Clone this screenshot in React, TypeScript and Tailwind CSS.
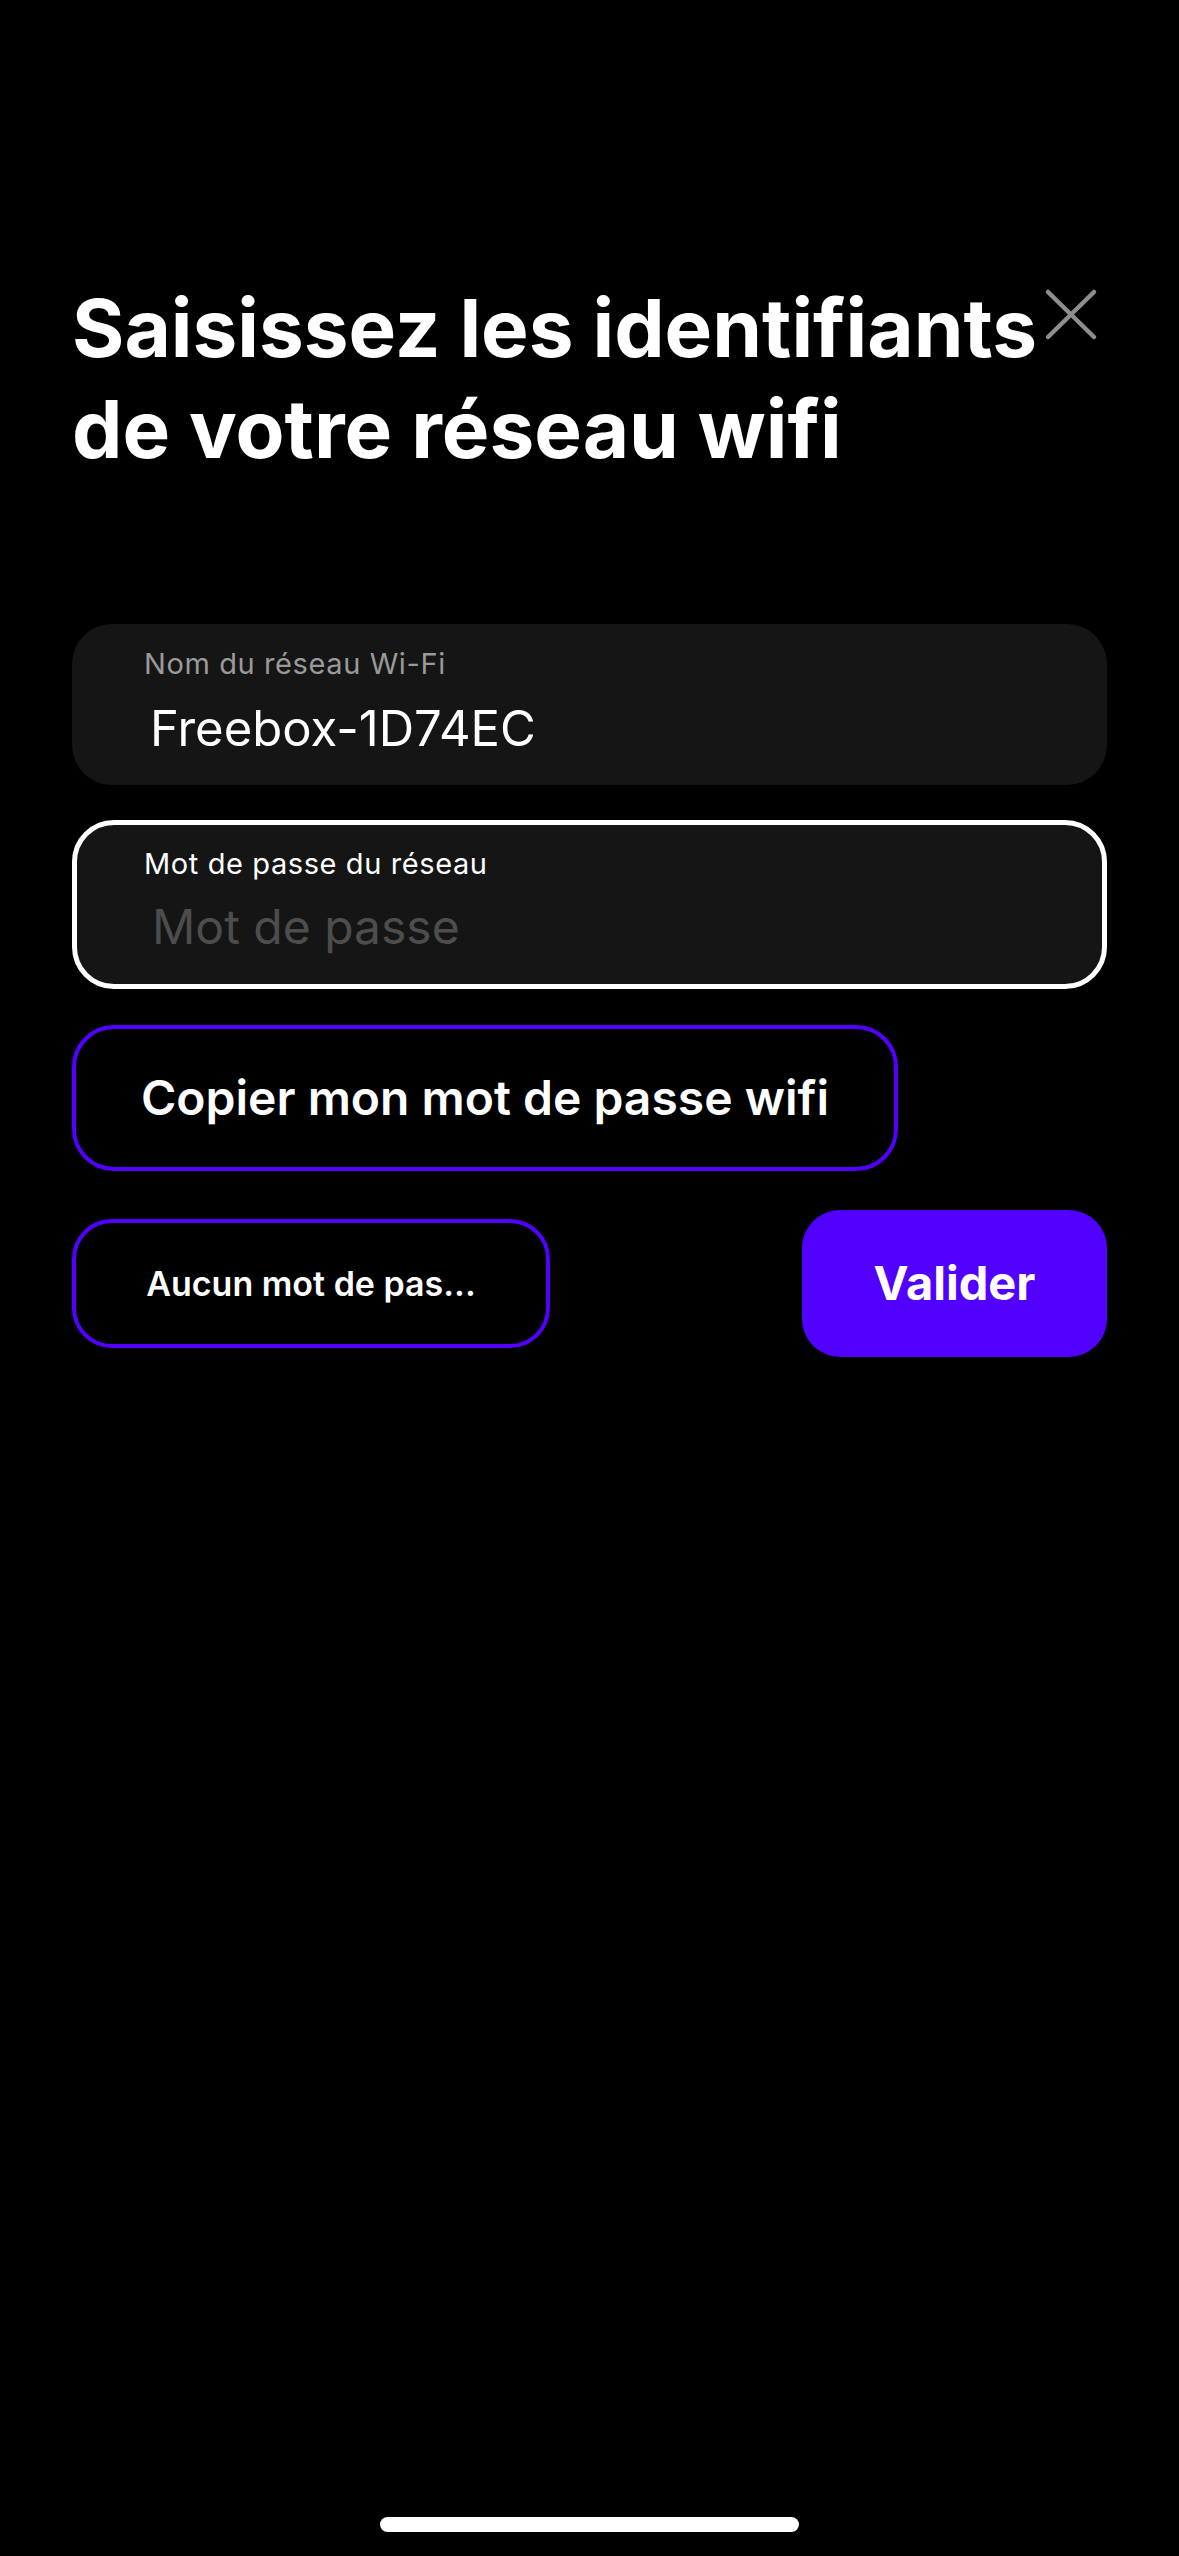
import React from 'react';

const FONT = { fontFamily: 'Inter, "Noto Sans", sans-serif' };

function CloseIcon() {
  return (
    <svg width="60" height="60" viewBox="0 0 60 60" fill="none" className="shrink-0">
      <path d="M7 7L53 52M53 7L7 52" stroke="#8e8e8e" strokeWidth="4.5" strokeLinecap="round" />
    </svg>
  );
}

export default function App() {
  return (
    <div className="flex min-h-[2556px] w-full flex-col bg-black text-white" style={FONT}>
      <div className="px-[72px] pt-[277px]">
        {/* Header */}
        <div className="flex items-start justify-between">
          <h1 className="w-[968px] text-[80px] font-bold leading-[101px]">
            Saisissez les identifiants de votre réseau wifi
          </h1>
          <div className="mr-[6px] mt-[8px]">
            <CloseIcon />
          </div>
        </div>

        {/* Network name */}
        <div className="mt-[145px] flex h-[161px] flex-col rounded-[40px] bg-[#151515] pl-[72px] pt-[23px]">
          <span className="text-[29px] leading-[34px] tracking-[0.6px] text-[#9a9a9a]">Nom du réseau Wi-Fi</span>
          <span className="mt-[20px] pl-[6px] text-[49px] leading-[56px] text-white">Freebox-1D74EC</span>
        </div>

        {/* Password */}
        <div className="mt-[35px] flex h-[169px] flex-col rounded-[42px] border-[5px] border-white bg-[#151515] pl-[67px] pt-[22px]">
          <span className="text-[29px] leading-[34px] tracking-[0.6px] text-white">Mot de passe du réseau</span>
          <span className="mt-[18px] pl-[8px] text-[48px] leading-[56px] text-[#4d4d4d]">Mot de passe</span>
        </div>

        {/* Copy button */}
        <button className="mt-[36px] flex h-[146px] w-[826px] items-center justify-center rounded-[42px] border-[4px] border-[#5200ff] text-[48px] font-semibold text-white">
          Copier mon mot de passe wifi
        </button>

        {/* Bottom row */}
        <div className="mt-[39px] flex items-center justify-between">
          <button className="flex h-[129px] w-[478px] items-center justify-center rounded-[40px] border-[4px] border-[#5200ff] text-[34px] font-semibold text-white">
            Aucun mot de pas...
          </button>
          <button className="flex h-[147px] w-[305px] items-center justify-center rounded-[38px] bg-[#5200ff] text-[47px] font-bold text-white">
            Valider
          </button>
        </div>
      </div>

      <div className="flex-1" />
      <div className="mx-auto mb-[24px] h-[15px] w-[419px] rounded-full bg-white" />
    </div>
  );
}
